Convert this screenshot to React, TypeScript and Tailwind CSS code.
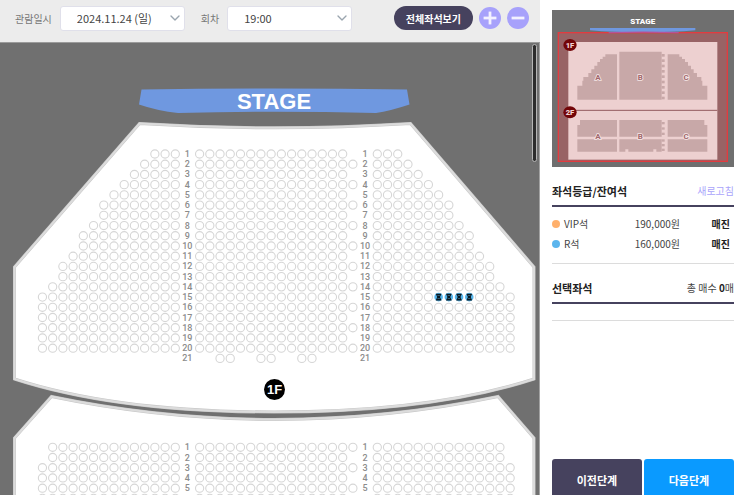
import { ChevronDown, Minus, Plus } from "lucide-react";

const PITCH = 10.22;

const FIRST_FLOOR_SIDE = [3, 4, 5, 6, 7, 8, 8, 9, 10, 10, 11, 12, 12, 13, 14, 14, 14, 14, 14, 14, 0];
const SECOND_FLOOR_SIDE = [13, 13, 14, 14, 14, 14];

const range = (from: number, to: number) => Array.from({ length: Math.max(0, to - from + 1) }, (_, i) => from + i);

const Seat = ({ x, y }: { x: number; y: number }) => (
  <circle cx={x} cy={y} r="4.1" fill="#fff" stroke="#d6d6d6" strokeWidth="1.1" />
);

const OpenSeat = ({ x, y }: { x: number; y: number }) => (
  <g>
    <circle cx={x} cy={y} r="4.3" fill="#55b4ea" />
    <path
      d={`M${x - 2.9} ${y - 3.4}h5.8l-1.5 3.4l1.5 3.4h-5.8l1.5-3.4z`}
      fill="#0b1820"
    />
    <path d={`M${x - 1.2} ${y - 1.6}l2.4 0M${x - 1.2} ${y + 1.4}l2.4 0`} stroke="#3b7fa6" strokeWidth="0.7" />
  </g>
);

const Floor = ({
  name,
  top,
  side,
  aisleParity,
  numbered,
  open = [],
}: {
  name: string;
  top: number;
  side: number[];
  aisleParity: number;
  numbered: number;
  open?: string[];
}) => (
  <g>
    {side.map((count, index) => {
      const row = index + 1;
      const y = top + index * PITCH;
      const middle = count === 0 ? [2, 3, 6, 7, 10, 11] : range(0, 14);
      if (count > 0 && row % 2 === aisleParity) middle.push(15);
      return (
        <g key={row}>
          {range(0, count - 1).map((i) => (
            <Seat key={`a${i}`} x={175.3 - i * PITCH} y={y} />
          ))}
          {middle.map((i) => (
            <Seat key={`b${i}`} x={199.6 + i * PITCH} y={y} />
          ))}
          {range(0, count - 1).map((i) => {
            const x = 377.3 + i * PITCH;
            return open.includes(`${name}-${row}-${i + 1}`) ? (
              <OpenSeat key={`c${i}`} x={x} y={y} />
            ) : (
              <Seat key={`c${i}`} x={x} y={y} />
            );
          })}
          {row <= numbered &&
            [187.3, 365].map((x) => (
              <text key={x} x={x} y={y + 3} textAnchor="middle" fontSize="9" fontWeight="500" fill="#8c8c8c">
                {row}
              </text>
            ))}
        </g>
      );
    })}
  </g>
);

const FIRST_FLOOR = "M139.5 123.5Q274 132 410.5 123.5L534 267V379Q432 412 274 412Q116 412 14.5 379V267Z";
const SECOND_FLOOR = "M51.5 396.5Q160 419 274 419.5Q390 419 498 396.5L534 438V580H14.5V438Z";

const SeatMap = () => (
  <svg
    viewBox="0 43 539 480"
    className="block w-full font-['Roboto',sans-serif]"
    role="img"
    aria-label="좌석 배치도"
  >
    <path d="M141.5 89.5Q274 87.5 407 89.5L409.5 104.5Q390 111 376 113Q274 110.5 178 113Q158 111 139 104.5Z" fill="#6f98e0" />
    <text x="274" y="109" textAnchor="middle" fontSize="22" fontWeight="700" fill="#fff" className="font-['Liberation_Sans',sans-serif]">
      STAGE
    </text>
    {[FIRST_FLOOR, SECOND_FLOOR].map((d) => (
      <g key={d}>
        <path d={d} fill="#fff" stroke="#c6c6c6" strokeWidth="3" />
        <path d={d} fill="none" stroke="#dcdcdc" strokeWidth="2" />
      </g>
    ))}
    <Floor
      name="1F"
      top={154}
      side={FIRST_FLOOR_SIDE}
      aisleParity={0}
      numbered={21}
      open={["1F-15-7", "1F-15-8", "1F-15-9", "1F-15-10"]}
    />
    <circle cx="274.5" cy="389.5" r="10.5" fill="#000" />
    <text x="274.5" y="394" textAnchor="middle" fontSize="13" fontWeight="700" fill="#fff" className="font-['Liberation_Sans',sans-serif]">
      1F
    </text>
    <Floor name="2F" top={447.3} side={SECOND_FLOOR_SIDE} aisleParity={1} numbered={5} />
  </svg>
);

const MINI_LABELS = [
  { name: "A", x: 138 },
  { name: "B", x: 265 },
  { name: "C", x: 402 },
];

const MiniMap = () => (
  <svg viewBox="0 0 546 471" className="block w-full font-['Roboto',sans-serif]" role="img" aria-label="전체 좌석 미니맵">
    <rect width="546" height="471" fill="#6f6f6f" />
    <text x="272" y="42" textAnchor="middle" fontSize="24" fontWeight="900" fill="#fff">
      STAGE
    </text>
    <path d="M114 54H430V61Q360 67 272 67Q184 67 114 61Z" fill="#6f98e0" />
    <rect x="19" y="68" width="507" height="386" fill="#986365" stroke="#e33b3f" strokeWidth="4" />
    <path d="M170 68Q272 65 380 68" stroke="#b5539a" strokeWidth="4" fill="none" />
    <rect x="49" y="96" width="447" height="353" fill="#edd0d0" />
    <path d="M49 301H496" stroke="#935b5e" strokeWidth="3" />
    <g fill="#c8a8a8">
      <path d="M76 269V227H91V212H94V201H109V189H118V178H127V167H136V156H144V147H152V140H160V133H195V269Z" />
      <path d="M202 125H329V269H202Z" />
      <path d="M347 269V133H382V140H390V147H399V156H408V167H417V178H425V189H435V201H448V212H451V227H466V269Z" />
      <path d="M76 380V345H84V330H195V380ZM202 330H329V380H202ZM347 330H457V345H466V380H347Z" />
      <path d="M76 388H195V425H76ZM202 388H329V425H313V418H304V425H229V418H220V425H202ZM347 388H466V425H347Z" />
      {range(0, 8).map((i) => (
        <rect key={i} x="329" y={132 + i * 16} width="9" height="8" />
      ))}
      {[336, 352, 368, 388, 402, 416].map((y) => (
        <rect key={y} x="329" y={y} width="9" height="7" />
      ))}
    </g>
    {[211, 386].map((y) =>
      MINI_LABELS.map((label) => (
        <text
          key={`${label.name}${y}`}
          x={label.x}
          y={y}
          textAnchor="middle"
          fontSize="24"
          fontWeight="700"
          fill="#a0686b"
          stroke="#f6e6e6"
          strokeWidth="5"
          paintOrder="stroke"
        >
          {label.name}
        </text>
      ))
    )}
    {[
      { name: "1F", y: 105 },
      { name: "2F", y: 307 },
    ].map((floor) => (
      <g key={floor.name}>
        <ellipse cx="54" cy={floor.y} rx="20" ry="18" fill="#720508" />
        <text x="54" y={floor.y + 8} textAnchor="middle" fontSize="23" fontWeight="900" fill="#f1d3d3">
          {floor.name}
        </text>
      </g>
    ))}
  </svg>
);

const SelectBox = ({ id, value }: { id: string; value: string }) => (
  <div className="relative w-[125px]">
    <select
      id={id}
      defaultValue={value}
      className="block h-[25px] w-full appearance-none rounded-[3px] border border-[#e0e0ea] bg-white pl-4 pr-6 text-[11px] text-[#444]"
    >
      <option>{value}</option>
    </select>
    <ChevronDown className="pointer-events-none absolute right-0.5 top-1 text-[#9aa5ae]" size={16} strokeWidth={2} />
  </div>
);

const GRADES = [
  { name: "VIP석", price: "190,000원", dot: "bg-[#ffb06c]" },
  { name: "R석", price: "160,000원", dot: "bg-[#5bb5ed]" },
];

const App = () => {
  return (
    <div className="flex h-screen overflow-hidden bg-white font-['Noto_Sans_CJK_KR',sans-serif] text-[10px] text-[#444]">
      <main className="flex min-w-0 flex-1 flex-col">
        <header className="flex h-[43px] shrink-0 items-start border-b border-[#9b9b9b] bg-[#ececec] pl-[15px] pr-[11px] pt-1.5">
          <div className="flex flex-1 items-center">
            <label htmlFor="date" className="mr-2 text-[#777]">관람일시</label>
            <SelectBox id="date" value="2024.11.24 (일)" />
            <label htmlFor="time" className="ml-4 mr-2 text-[#777]">회차</label>
            <SelectBox id="time" value="19:00" />
          </div>
          <div className="flex items-center gap-1.5">
            <button className="h-6 rounded-full bg-[#46425e] px-3 font-bold text-white">전체좌석보기</button>
            <button aria-label="확대" className="flex size-[22px] items-center justify-center rounded-full bg-[#a7a1fb] text-[#f3f1ff]">
              <Plus size={22} strokeWidth={3} strokeLinecap="butt" />
            </button>
            <button aria-label="축소" className="flex size-[22px] items-center justify-center rounded-full bg-[#a7a1fb] text-[#f3f1ff]">
              <Minus size={22} strokeWidth={3} strokeLinecap="butt" />
            </button>
          </div>
        </header>

        <div className="relative min-h-0 flex-1 overflow-hidden border-r border-[#a3a3a3] bg-[#707070]">
          <SeatMap />
          <div className="absolute right-0.5 top-px h-[118px] w-[5px] rounded-sm border border-[#b5b5b5] bg-[#2b2b2b]" />
        </div>
      </main>

      <aside className="flex w-[203px] shrink-0 flex-col pl-3 pr-[9px] pt-2.5">
        <MiniMap />

        <section>
          <div className="mt-4 flex h-6 items-start justify-between border-b-2 border-[#46425e]">
            <h2 className="text-[11px] font-bold text-[#222]">좌석등급/잔여석</h2>
            <button className="text-[#aaa4fb]">새로고침</button>
          </div>
          <table className="mt-1.5 w-full">
            <tbody>
              {GRADES.map((grade) => (
                <tr key={grade.name} className="h-5">
                  <td>
                    <span className={`mr-1 inline-block size-2 rounded-full ${grade.dot}`} />
                    {grade.name}
                  </td>
                  <td className="w-[60px] text-right">{grade.price}</td>
                  <td className="w-[54px] pr-1 text-right font-bold text-[#222]">매진</td>
                </tr>
              ))}
            </tbody>
          </table>
        </section>

        <section className="mt-2.5 border-y border-[#dcdcdc] pb-4 pt-4">
          <div className="flex h-6 items-start justify-between border-b-2 border-[#46425e]">
            <h2 className="text-[11px] font-bold text-[#222]">선택좌석</h2>
            <p>
              총 매수 <b className="text-[#222]">0</b>매
            </p>
          </div>
        </section>

        <div className="mt-auto flex gap-0.5 text-[11px] font-bold text-white">
          <button className="h-9 flex-1 rounded-t-[3px] bg-[#46425e] pt-1.5">이전단계</button>
          <button className="h-9 flex-1 rounded-t-[3px] bg-[#0a9aff] pt-1.5">다음단계</button>
        </div>
      </aside>
    </div>
  );
};

export default App;
